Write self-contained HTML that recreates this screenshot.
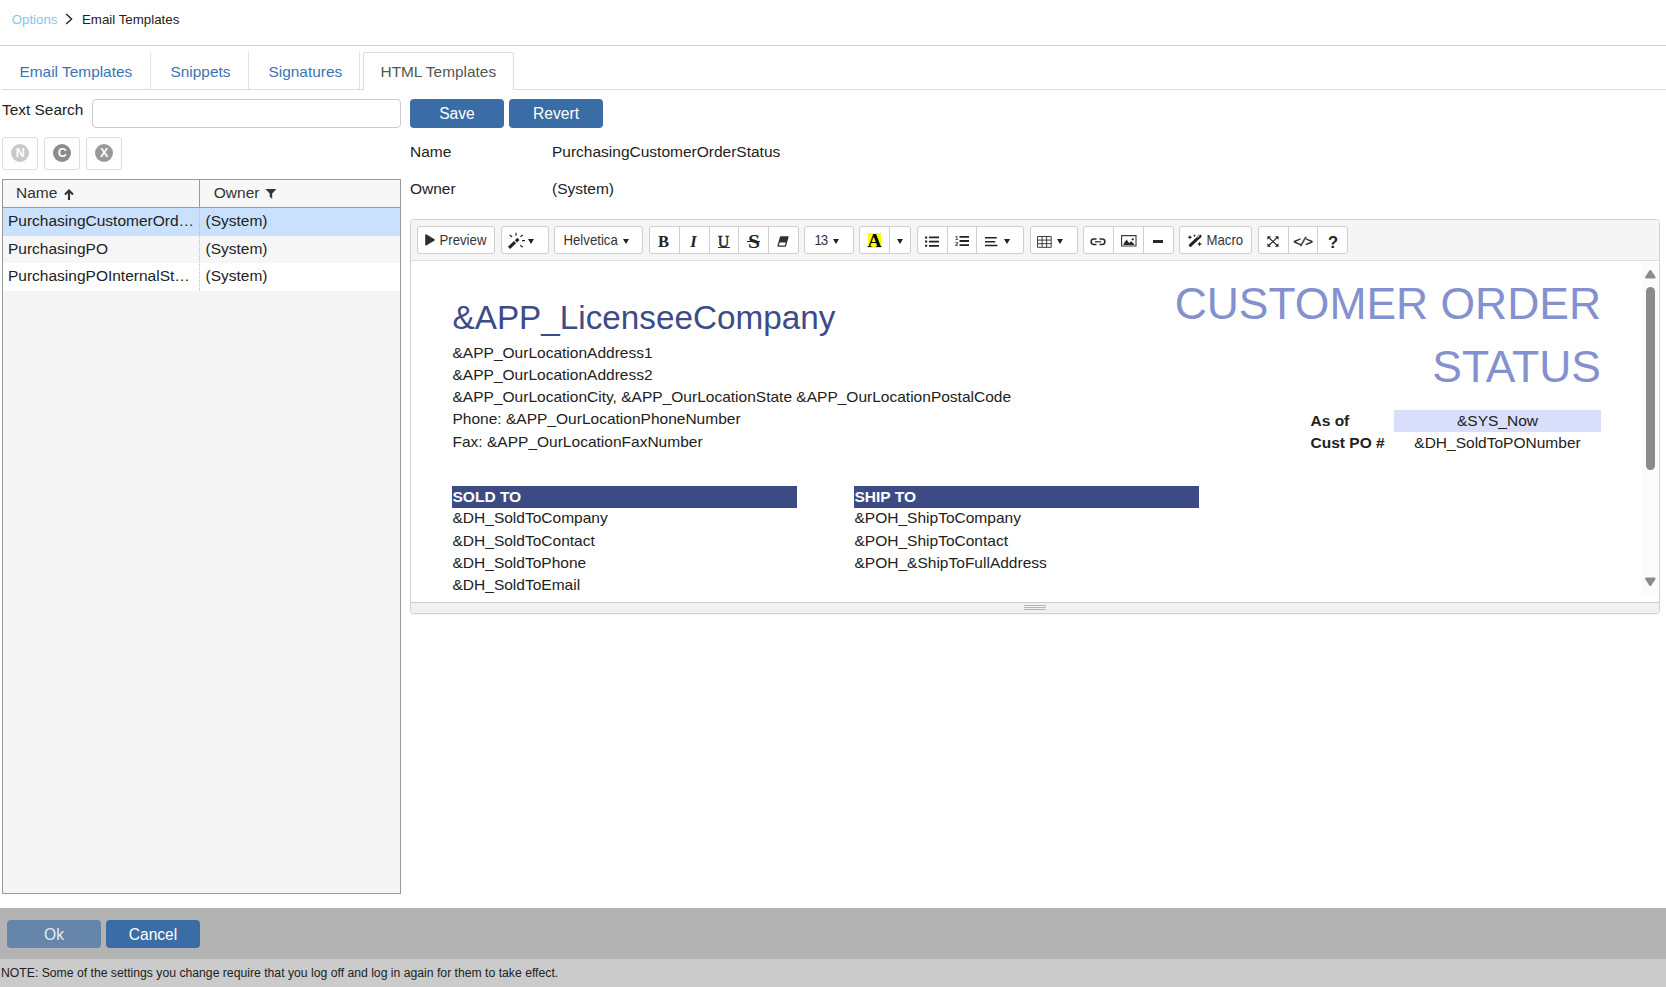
<!DOCTYPE html>
<html><head><meta charset="utf-8"><title>Email Templates</title>
<style>
*{box-sizing:border-box;margin:0;padding:0}
html,body{width:1666px;height:987px;overflow:hidden;background:#fff}
body{font-family:"Liberation Sans",Arial,sans-serif;color:#222;position:relative}
.abs{position:absolute;white-space:nowrap}
.t{position:absolute;white-space:nowrap;line-height:20px;font-size:15.5px;color:#222}
.bc{font-size:13.3px}
.tab{font-size:15.42px;color:#3a74b5}
.btn{position:absolute;background:#3a6da5;border-radius:4px;color:#fff;text-align:center;font-size:15.6px}
.ib{position:absolute;width:35.5px;height:32.5px;border:1px solid #ddd;border-radius:3px;background:#fff}
.ib i{position:absolute;left:7.8px;top:6px;width:18.2px;height:18.2px;border-radius:50%;background:#8c8c8c;color:#fff;font-style:normal;font-weight:bold;font-size:12.4px;line-height:19.4px;text-align:center}
.tb{position:absolute;top:226px;height:28px;background:#fff;border:1px solid #cfcfcf;border-radius:3px}
.sep{position:absolute;top:0;bottom:0;width:1px;background:#cfcfcf}
.tb .lbl{position:absolute;top:0;font-size:13.2px;line-height:28px;transform:scaleY(1.055);transform-origin:50% 67%;color:#333;white-space:nowrap}
.car{position:absolute;width:0;height:0;border-left:3.5px solid transparent;border-right:3.5px solid transparent;border-top:5.3px solid #222}
.ed{font-size:15.52px;color:#222;line-height:22px}
.gl{position:absolute;top:0;text-align:center;font-family:"Liberation Serif",serif;font-size:16px;line-height:27px;color:#222}
svg{position:absolute;overflow:visible}
</style></head><body>

<!-- breadcrumb -->
<div class="t bc" style="left:11.7px;top:10px;color:#8cc4e8">Options</div>
<svg style="left:65px;top:13px" width="8" height="12" viewBox="0 0 8 12"><path d="M1.2 1 L6.6 6 L1.2 11" fill="none" stroke="#222" stroke-width="1.4"/></svg>
<div class="t bc" style="left:82px;top:10px;color:#222">Email Templates</div>
<div class="abs" style="left:0;top:45px;width:1666px;height:1px;background:#d4d4d4"></div>

<!-- tabs -->
<div class="abs" style="left:2px;top:89px;width:1664px;height:1px;background:#ddd"></div>
<div class="abs" style="left:150px;top:52px;width:1px;height:37px;background:#e2e2e2"></div>
<div class="abs" style="left:248px;top:52px;width:1px;height:37px;background:#e2e2e2"></div>
<div class="abs" style="left:359px;top:52px;width:1px;height:37px;background:#e2e2e2"></div>
<div class="abs" style="left:363px;top:52px;width:151px;height:38px;border:1px solid #ddd;border-bottom:none;background:#fff;border-radius:2px 2px 0 0"></div>
<div class="t tab" style="left:19.5px;top:62px">Email Templates</div>
<div class="t tab" style="left:170.5px;top:62px">Snippets</div>
<div class="t tab" style="left:268.5px;top:62px">Signatures</div>
<div class="t tab" style="left:380.5px;top:62px;color:#555">HTML Templates</div>

<!-- search row -->
<div class="t" style="left:2px;top:100px;font-size:15.42px">Text Search</div>
<div class="abs" style="left:92px;top:99px;width:309px;height:29px;border:1px solid #ccc;border-radius:4px;background:#fff"></div>
<div class="btn" style="left:410px;top:99px;width:94px;height:29px;line-height:29px">Save</div>
<div class="btn" style="left:509px;top:99px;width:94px;height:29px;line-height:29px">Revert</div>

<!-- icon buttons -->
<div class="ib" style="left:2.25px;top:137px"><i style="background:#c9c9c9">N</i></div>
<div class="ib" style="left:44.25px;top:137px"><i>C</i></div>
<div class="ib" style="left:86.25px;top:137px"><i style="background:#999">X</i></div>

<!-- grid -->
<div class="abs" style="left:2px;top:179px;width:399px;height:715px;border:1px solid #999;background:#f5f5f5"></div>
<div class="abs" style="left:3px;top:180px;width:397px;height:27.6px;background:#f7f7f7;border-bottom:1px solid #999"></div>
<div class="abs" style="left:199px;top:180px;width:1px;height:27.6px;background:#999"></div>
<div class="abs" style="left:3px;top:207.5px;width:397px;height:28px;background:#c9e1fc"></div>
<div class="abs" style="left:3px;top:235.5px;width:397px;height:27.5px;background:#f6f6f6"></div>
<div class="abs" style="left:3px;top:263px;width:397px;height:28px;background:#fff"></div>
<div class="abs" style="left:199px;top:208px;width:0;height:83px;border-left:1px dotted #bbb"></div>
<div class="t" style="left:16px;top:183px;color:#333">Name</div>
<div class="t" style="left:213.8px;top:183px;color:#333">Owner</div>
<svg style="left:62.5px;top:189px" width="12" height="12" viewBox="0 0 12 12"><path d="M6 1.6 L6 11 M2 5.6 L6 1.6 L10 5.6" fill="none" stroke="#333" stroke-width="2.1"/></svg>
<svg style="left:264.6px;top:188px" width="12" height="12" viewBox="0 0 12 12"><path d="M0.4 1 H11.4 L7.2 5.4 V10.8 L4.7 8.8 V5.4 Z" fill="#333"/></svg>
<div class="t" style="left:8px;top:211px;width:188px;overflow:hidden;text-overflow:ellipsis">PurchasingCustomerOrderStatus</div>
<div class="t" style="left:205.5px;top:211px">(System)</div>
<div class="t" style="left:8px;top:239px">PurchasingPO</div>
<div class="t" style="left:205.5px;top:239px">(System)</div>
<div class="t" style="left:8px;top:266px;width:184px;overflow:hidden;text-overflow:ellipsis">PurchasingPOInternalStatus</div>
<div class="t" style="left:205.5px;top:266px">(System)</div>

<!-- form -->
<div class="t" style="left:410px;top:141.5px">Name</div>
<div class="t" style="left:552px;top:141.5px">PurchasingCustomerOrderStatus</div>
<div class="t" style="left:410px;top:178.5px">Owner</div>
<div class="t" style="left:552px;top:178.5px">(System)</div>

<!-- editor frame -->
<div class="abs" style="left:410px;top:219px;width:1250px;height:395px;border:1px solid #d2d2d2;border-radius:4px;background:#fff;box-shadow:0 1px 1px rgba(0,0,0,.05)"></div>
<div class="abs" style="left:411px;top:220px;width:1248px;height:41px;background:#f5f5f5;border-bottom:1px solid #ddd;border-radius:3px 3px 0 0"></div>
<div class="abs" style="left:411px;top:602px;width:1248px;height:11px;background:#f1f1f1;border-top:1px solid #ccc;border-radius:0 0 3px 3px"></div>
<div class="abs" style="left:1024px;top:605px;width:22px;height:1px;background:#b5b5b5"></div>
<div class="abs" style="left:1024px;top:607px;width:22px;height:1px;background:#b5b5b5"></div>
<div class="abs" style="left:1024px;top:609px;width:22px;height:1px;background:#b5b5b5"></div>

<!-- scrollbar -->
<div class="abs" style="left:1642px;top:261px;width:16px;height:333px;background:#fbfbfb"></div>
<svg style="left:1644.1px;top:269.2px" width="12.6" height="11" viewBox="0 0 11 10"><path d="M5.5 2 L9.2 7.6 H1.8 Z" fill="#8b8b8b" stroke="#8b8b8b" stroke-width="2.2" stroke-linejoin="round"/></svg>
<div class="abs" style="left:1646px;top:286.5px;width:9px;height:183px;border-radius:4.5px;background:#8b8b8b"></div>
<svg style="left:1644.1px;top:575.8px" width="12.6" height="11" viewBox="0 0 11 10"><path d="M5.5 8 L9.2 2.4 H1.8 Z" fill="#8b8b8b" stroke="#8b8b8b" stroke-width="2.2" stroke-linejoin="round"/></svg>

<!-- TOOLBAR -->
<div id="toolbar">
<!-- Preview -->
<div class="tb" style="left:417px;width:78px">
 <svg style="left:6.5px;top:6.6px" width="11" height="12" viewBox="0 0 11 12"><path d="M0.9 0.9 L9.2 5.9 L0.9 10.9 Z" fill="#2e2e2e" stroke="#2e2e2e" stroke-width="1.3" stroke-linejoin="round"/></svg>
 <span class="lbl" style="left:21.5px">Preview</span>
</div>
<!-- magic -->
<div class="tb" style="left:501px;width:48px">
 <svg style="left:5px;top:6px" width="18" height="16" viewBox="0 0 18 16"><path d="M2 14.9 L8 9.2 M8.9 8.3 L11.4 5.9" stroke="#222" stroke-width="3.1" fill="none"/><path d="M9 -0.2 V2.7 M2.7 2 L5.2 4 M15.8 2 L13.4 3.7 M15 7.6 H18 M13.2 12.1 L15.7 14.3" stroke="#222" stroke-width="1.2" fill="none"/></svg>
 <div class="car" style="left:25.5px;top:12px"></div>
</div>
<!-- font -->
<div class="tb" style="left:554px;width:89px">
 <span class="lbl" style="left:8.5px">Helvetica</span>
 <div class="car" style="left:67.5px;top:12px"></div>
</div>
<!-- style group -->
<div class="tb" style="left:649px;width:150px">
 <div class="sep" style="left:28.5px"></div><div class="sep" style="left:58.5px"></div><div class="sep" style="left:88px"></div><div class="sep" style="left:117.5px"></div>
 <span class="gl" style="left:-1.5px;width:30px;font-weight:bold;font-size:16.5px;top:1px">B</span>
 <span class="gl" style="left:29px;width:29px;font-weight:bold;font-style:italic;font-size:16.5px;top:1px">I</span>
 <span class="gl" style="left:59px;width:29px;top:0.5px;-webkit-text-stroke:0.45px #222">U</span><div class="abs" style="left:67.5px;top:20.4px;width:12px;height:1px;background:#333"></div>
 <span class="gl" style="left:88.8px;width:30px;font-size:18.5px;font-weight:bold;top:1.5px;transform:scaleX(1.17)">S</span><div class="abs" style="left:97px;top:13.6px;width:13px;height:1.3px;background:#222"></div>
 <svg style="left:127px;top:9px" width="12" height="11" viewBox="0 0 12 11"><path d="M3.6 0.9 H11 L8.4 10.1 H1 Z" fill="#fff" stroke="#303030" stroke-width="1.3" stroke-linejoin="round"/><path d="M3.6 0.9 H11 L9.45 6.4 H2.05 Z" fill="#303030"/></svg>
</div>
<!-- size -->
<div class="tb" style="left:804px;width:50px">
 <span class="lbl" style="left:9.5px;letter-spacing:-1.1px">13</span>
 <div class="car" style="left:27.5px;top:12px"></div>
</div>
<!-- color -->
<div class="tb" style="left:859px;width:52px">
 <div class="sep" style="left:28.5px"></div>
 <div class="abs" style="left:8px;top:6px;width:13px;height:15px;background:#ff0"></div>
 <span class="gl" style="left:-0.5px;width:30px;font-weight:bold;color:#000;font-size:19.5px;top:-0.5px">A</span>
 <div class="car" style="left:36.5px;top:12px"></div>
</div>
<!-- lists -->
<div class="tb" style="left:917px;width:107px">
 <div class="sep" style="left:28.5px"></div><div class="sep" style="left:57.5px"></div>
 <svg style="left:7px;top:8.5px" width="14" height="11" viewBox="0 0 14 11"><path d="M0 0.4 H2.2 V2.4 H0 Z M0 4.6 H2.2 V6.6 H0 Z M0 8.8 H2.2 V10.8 H0 Z M4 0.5 H14 V2.3 H4 Z M4 4.7 H14 V6.5 H4 Z M4 8.9 H14 V10.7 H4 Z" fill="#222"/></svg>
 <svg style="left:36.5px;top:8px" width="14" height="12" viewBox="0 0 14 12"><path d="M4.5 0.9 H14 V2.7 H4.5 Z M4.5 5.1 H14 V6.9 H4.5 Z M4.5 9.3 H14 V11.1 H4.5 Z" fill="#222"/><text x="0" y="4.6" font-size="6" font-weight="bold" font-family="Liberation Sans" fill="#222">1</text><text x="0" y="11.4" font-size="6" font-weight="bold" font-family="Liberation Sans" fill="#222">2</text></svg>
 <svg style="left:66.5px;top:9.6px" width="13" height="10" viewBox="0 0 13 10"><path d="M0 0 H11.8 V1.5 H0 Z M0 3.9 H10.2 V5.4 H0 Z M0 7.8 H12.4 V9.3 H0 Z" fill="#222"/></svg>
 <div class="car" style="left:85.5px;top:12px"></div>
</div>
<!-- table -->
<div class="tb" style="left:1030px;width:48px">
 <svg style="left:6.2px;top:8.5px" width="15" height="12" viewBox="0 0 15 12"><path d="M0.5 0.5 H14.2 V11.3 H0.5 Z M0.5 4.1 H14.2 M0.5 7.7 H14.2 M5.1 0.5 V11.3 M9.6 0.5 V11.3" fill="none" stroke="#2a2a2a" stroke-width="0.9"/></svg>
 <div class="car" style="left:25.5px;top:12px"></div>
</div>
<!-- insert -->
<div class="tb" style="left:1083px;width:91px">
 <div class="sep" style="left:29px"></div><div class="sep" style="left:58.5px"></div>
 <svg style="left:6.3px;top:10.9px" width="16" height="8" viewBox="0 0 16 8"><path d="M6.5 1.1 H3.8 A2.7 2.7 0 0 0 3.8 6.5 H6.5 M9.5 1.1 H12.2 A2.7 2.7 0 0 1 12.2 6.5 H9.5" fill="none" stroke="#2a2a2a" stroke-width="1.5"/><path d="M5 3.8 H11" fill="none" stroke="#2a2a2a" stroke-width="1.2"/></svg>
 <svg style="left:36.5px;top:8.3px" width="16" height="12" viewBox="0 0 16 12"><path d="M0.6 0.6 H15 V11 H0.6 Z" fill="none" stroke="#3a3a3a" stroke-width="1.1"/><path d="M2.6 9.9 V8.8 L5.6 4.6 L8 8 L10 6.2 L13.2 9 V9.9 Z" fill="#2a2a2a"/><circle cx="11.7" cy="4.3" r="1.15" fill="#2a2a2a"/></svg>
 <div class="abs" style="left:69px;top:13.4px;width:10.2px;height:2.2px;background:#2a2a2a"></div>
</div>
<!-- macro -->
<div class="tb" style="left:1179px;width:73px">
 <svg style="left:8px;top:5.5px" width="15" height="15" viewBox="0 0 15 15"><path d="M2.3 12.3 L12.1 3.2" stroke="#222" stroke-width="3" stroke-linecap="round" fill="none"/><path d="M9.6 4.6 L11.4 2.9" stroke="#fff" stroke-width="0.8" stroke-linecap="round" fill="none"/><path d="M1.90 1.90 L2.58 3.52 L4.20 4.20 L2.58 4.88 L1.90 6.50 L1.22 4.88 L-0.40 4.20 L1.22 3.52 Z M6.50 1.20 L6.95 2.25 L8.00 2.70 L6.95 3.15 L6.50 4.20 L6.05 3.15 L5.00 2.70 L6.05 2.25 Z M11.60 8.50 L12.34 10.26 L14.10 11.00 L12.34 11.74 L11.60 13.50 L10.86 11.74 L9.10 11.00 L10.86 10.26 Z" fill="#222"/></svg>
 <span class="lbl" style="left:26.5px">Macro</span>
</div>
<!-- view -->
<div class="tb" style="left:1258px;width:90px">
 <div class="sep" style="left:28.5px"></div><div class="sep" style="left:57.5px"></div>
 <svg style="left:8px;top:9px" width="12" height="11" viewBox="0 0 13 12"><path d="M2 1.8 L11 10.2 M11 1.8 L2 10.2" stroke="#222" stroke-width="1.3" fill="none"/><path d="M0.4 0.4 H4.4 L0.4 4.2 Z M12.6 0.4 H8.6 L12.6 4.2 Z M0.4 11.6 H4.4 L0.4 7.8 Z M12.6 11.6 H8.6 L12.6 7.8 Z" fill="#222"/></svg>
 <span class="abs" style="left:34.3px;top:8px;font-family:'Liberation Mono',monospace;font-size:13px;letter-spacing:-1.8px;line-height:16px;color:#222;-webkit-text-stroke:0.35px #222">&lt;/&gt;</span>
 <span class="abs" style="left:59px;width:30px;text-align:center;top:5px;font-size:16.5px;line-height:20px;font-weight:bold;color:#222">?</span>
</div>
</div>

<!-- editor content -->
<div class="abs" style="left:452.5px;top:299px;font-size:33.27px;line-height:38px;color:#3d4b87">&amp;APP_LicenseeCompany</div>
<div class="abs ed" style="left:452.5px;top:341.5px">&amp;APP_OurLocationAddress1</div>
<div class="abs ed" style="left:452.5px;top:363.5px">&amp;APP_OurLocationAddress2</div>
<div class="abs ed" style="left:452.5px;top:385.5px">&amp;APP_OurLocationCity, &amp;APP_OurLocationState &amp;APP_OurLocationPostalCode</div>
<div class="abs ed" style="left:452.5px;top:407.5px">Phone: &amp;APP_OurLocationPhoneNumber</div>
<div class="abs ed" style="left:452.5px;top:430.5px">Fax: &amp;APP_OurLocationFaxNumber</div>

<div class="abs" style="right:65px;top:279px;font-size:44.44px;line-height:50px;color:#8491ce;text-align:right">CUSTOMER ORDER</div>
<div class="abs" style="right:65px;top:341.5px;font-size:44.44px;line-height:50px;color:#8491ce;text-align:right">STATUS</div>

<div class="abs" style="left:1394px;top:410px;width:207px;height:22px;background:#d9defb"></div>
<div class="abs ed" style="left:1310.5px;top:409.5px;font-weight:bold">As of</div>
<div class="abs ed" style="left:1310.5px;top:431.5px;font-weight:bold">Cust PO #</div>
<div class="abs ed" style="left:1394px;top:409.5px;width:207px;text-align:center">&amp;SYS_Now</div>
<div class="abs ed" style="left:1394px;top:431.5px;width:207px;text-align:center">&amp;DH_SoldToPONumber</div>

<div class="abs" style="left:452px;top:486px;width:345px;height:22px;background:#3d4b85"></div>
<div class="abs" style="left:854px;top:486px;width:345px;height:22px;background:#3d4b85"></div>
<div class="abs ed" style="left:452.5px;top:485.5px;font-weight:bold;color:#fff">SOLD TO</div>
<div class="abs ed" style="left:854.5px;top:485.5px;font-weight:bold;color:#fff">SHIP TO</div>
<div class="abs ed" style="left:452.5px;top:507px">&amp;DH_SoldToCompany</div>
<div class="abs ed" style="left:452.5px;top:530px">&amp;DH_SoldToContact</div>
<div class="abs ed" style="left:452.5px;top:552px">&amp;DH_SoldToPhone</div>
<div class="abs ed" style="left:452.5px;top:574px">&amp;DH_SoldToEmail</div>
<div class="abs ed" style="left:854.5px;top:507px">&amp;POH_ShipToCompany</div>
<div class="abs ed" style="left:854.5px;top:530px">&amp;POH_ShipToContact</div>
<div class="abs ed" style="left:854.5px;top:552px">&amp;POH_&amp;ShipToFullAddress</div>

<!-- footer -->
<div class="abs" style="left:0;top:908px;width:1666px;height:51px;background:#b3b3b3"></div>
<div class="abs" style="left:0;top:959px;width:1666px;height:28px;background:#cbcbcb"></div>
<div class="btn" style="left:7px;top:920px;width:94px;height:28px;line-height:29.6px;background:#6585ab;color:#e6edf5">Ok</div>
<div class="btn" style="left:106px;top:920px;width:94px;height:28px;line-height:29.6px">Cancel</div>
<div class="t" style="left:1px;top:963px;font-size:12.21px;color:#222">NOTE: Some of the settings you change require that you log off and log in again for them to take effect.</div>

</body></html>
